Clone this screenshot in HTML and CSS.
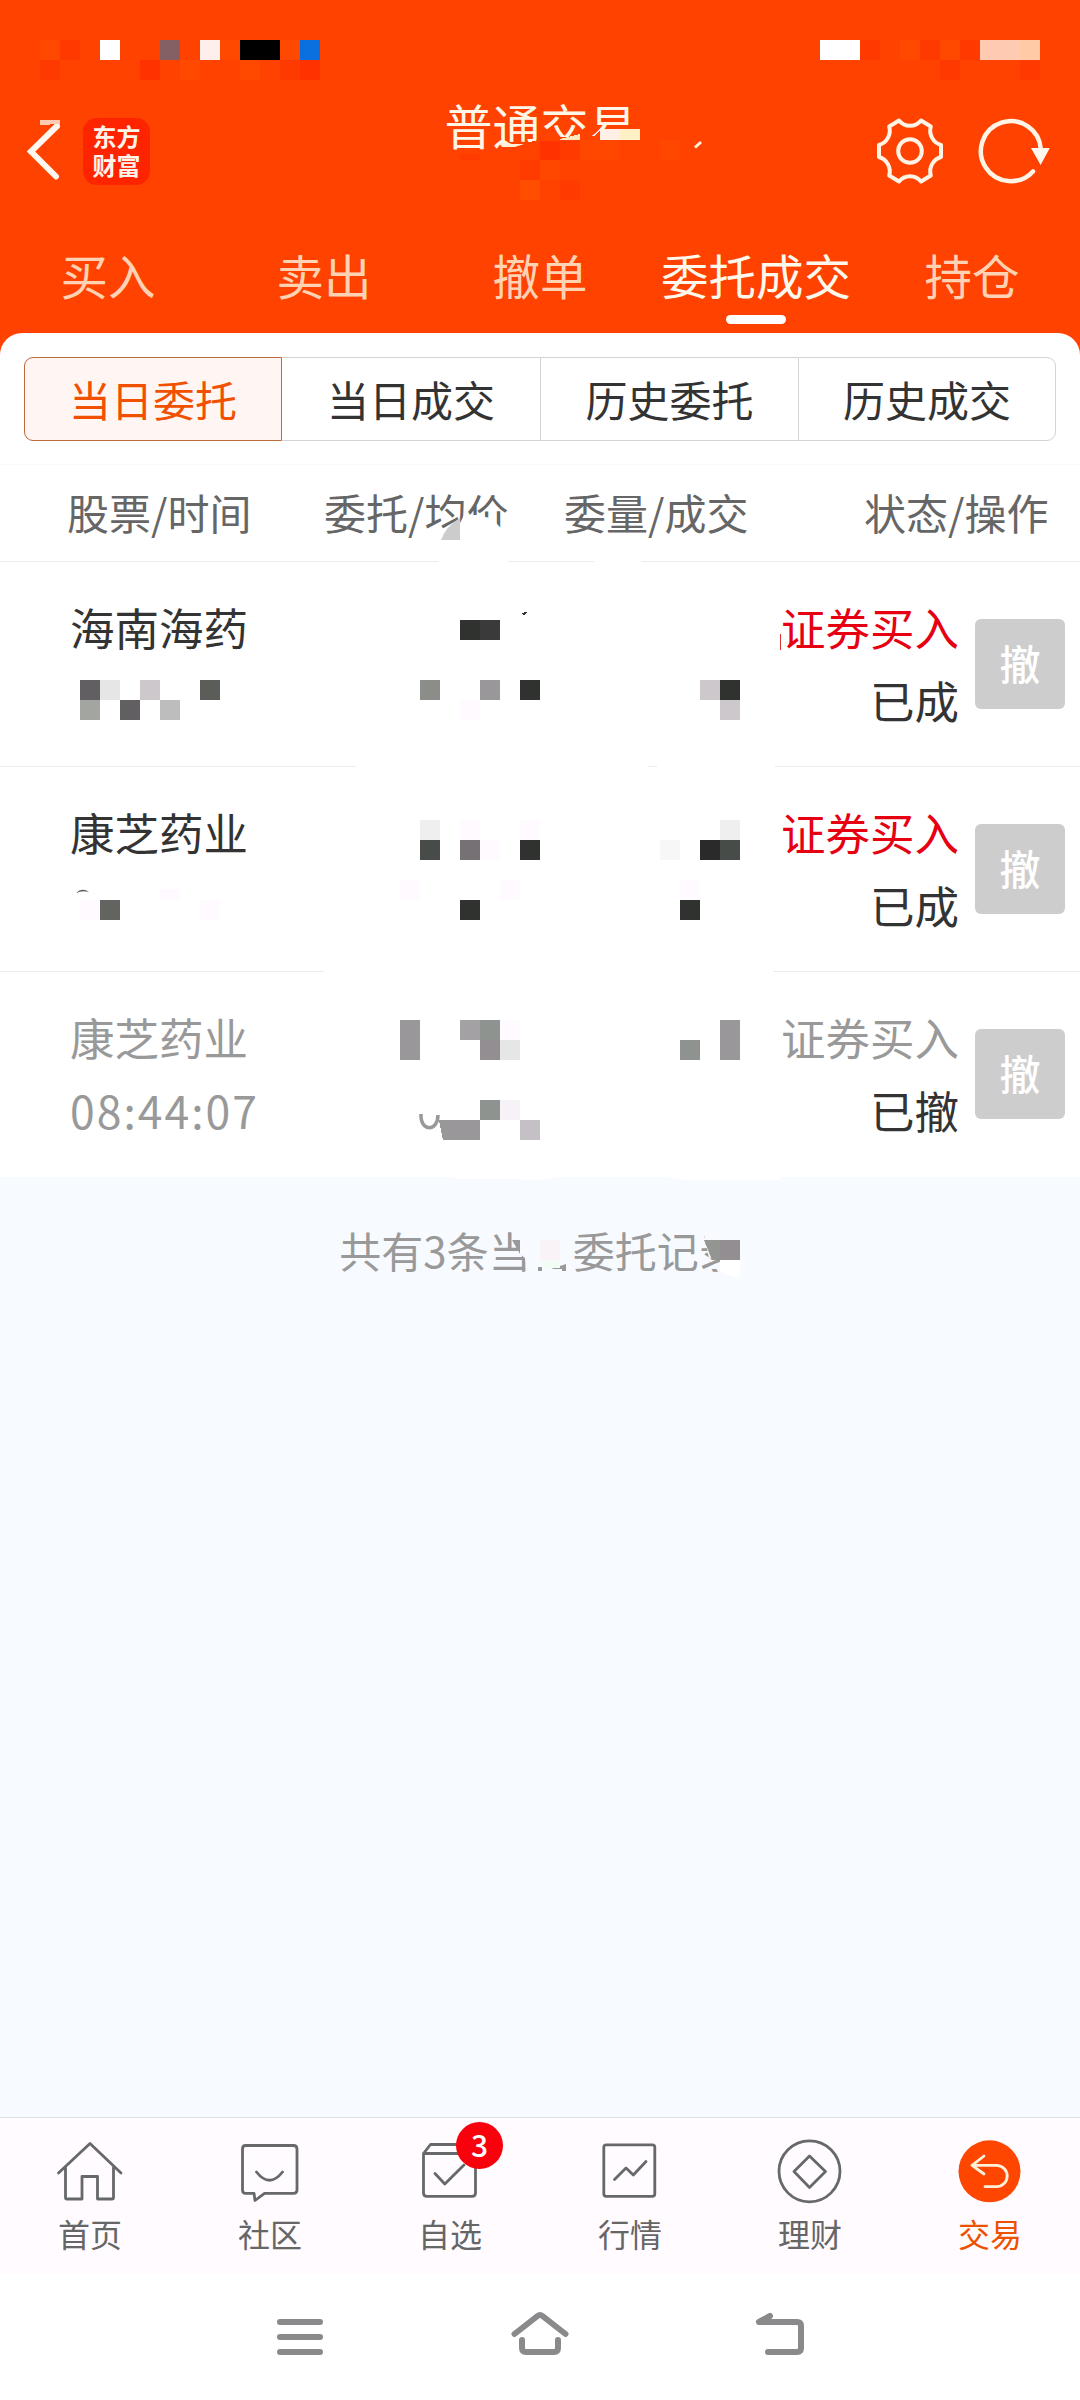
FILE: index.html
```html
<!DOCTYPE html>
<html lang="zh-CN">
<head>
<meta charset="utf-8">
<title>普通交易</title>
<link rel="stylesheet" href="styles.css">
</head>
<body>
<div class="screen">
  <header class="header">
    <div class="titlebar">
      <div class="titlebar-left">
        <svg class="back" viewBox="0 0 40 66" width="40" height="66"><path d="M37 8L11 33.500L36 58.500" fill="none" stroke="#fff8f0" stroke-width="6" stroke-linecap="round" stroke-linejoin="miter"/></svg>
        <div class="logo"><span>东方</span><span>财富</span></div>
      </div>
      <h1 class="title">普通交易</h1>
      <div class="titlebar-right">
        <svg viewBox="-36 -36 72 72" width="72" height="72" fill="none" stroke="#fff4e6" stroke-width="4" stroke-linejoin="round">
          <path d="M31 -6V6A15 15 0 0 0 20.800 24.500L11 30.500A14 14 0 0 0 -11 30.500L-20.800 24.500A15 15 0 0 0 -31 6V-6A15 15 0 0 0 -20.800 -24.500L-11 -30.500A14 14 0 0 0 11 -30.500L20.800 -24.500A15 15 0 0 0 31 -6Z"/>
          <circle r="11.800"/>
        </svg>
        <svg viewBox="-36 -36 78 72" width="78" height="72">
          <path d="M29.800 -2A30 30 0 1 0 22 20.400" fill="none" stroke="#fff4e6" stroke-width="4.500" stroke-linecap="round"/>
          <path d="M20 -3H38.800L29.600 14Z" fill="#fff8f0"/>
        </svg>
      </div>
    </div>
    <nav class="tabs">
      <span class="tab">买入</span>
      <span class="tab">卖出</span>
      <span class="tab">撤单</span>
      <span class="tab tab-on">委托成交</span>
      <span class="tab">持仓</span>
    </nav>
  </header>

  <main class="panel">
    <div class="segments">
      <span class="segment segment-on">当日委托</span>
      <span class="segment">当日成交</span>
      <span class="segment">历史委托</span>
      <span class="segment">历史成交</span>
    </div>
    <div class="columns">
      <span>股票/时间</span>
      <span>委托/均价</span>
      <span>委量/成交</span>
      <span>状态/操作</span>
    </div>
    <section class="order">
      <div class="stock"><span>海南海药</span></div>
      <div class="state"><span class="buy">证券买入</span><span>已成</span></div>
      <button class="cancel">撤</button>
    </section>
    <section class="order">
      <div class="stock"><span>康芝药业</span></div>
      <div class="state"><span class="buy">证券买入</span><span>已成</span></div>
      <button class="cancel">撤</button>
    </section>
    <section class="order order-off">
      <div class="stock"><span>康芝药业</span><span class="time">08:44:07</span></div>
      <div class="state"><span class="buy">证券买入</span><span>已撤</span></div>
      <button class="cancel">撤</button>
    </section>
  </main>

  <div class="rest"><p class="summary">共有3条当日委托记录</p></div>

  <nav class="bottom">
    <div class="item">
      <svg class="icon" viewBox="0 0 80 80"><path d="M8.500 43L40 13.500L71 43M15.500 37.500V67.500Q15.500 69 17 69H32V46.500H47.500V69H62Q63.500 69 63.500 67.500V37.500"/></svg>
      <span>首页</span>
    </div>
    <div class="item">
      <svg class="icon" viewBox="0 0 80 80"><path d="M15.500 15.500H63.500Q67 15.500 67 19V60Q67 63.300 63.500 63.300H34.500L25 70.500L24 63.300H15.500Q12.500 63.300 12.500 60V19Q12.500 15.500 15.500 15.500ZM26.500 42Q39.500 58.500 52.500 42"/></svg>
      <span>社区</span>
    </div>
    <div class="item">
      <svg class="icon" viewBox="0 0 80 80"><path d="M13.500 23.500L20.500 14.500H58.500L65.500 23.500V63Q65.500 66.300 62 66.300H17Q13.500 66.300 13.500 63ZM13.500 23.500H65.500M25 43.500L34.800 54L54 35"/></svg>
      <span>自选</span>
      <b class="badge">3</b>
    </div>
    <div class="item">
      <svg class="icon" viewBox="0 0 80 80"><rect x="13.800" y="14.800" width="51" height="51.500" rx="2.500"/><path d="M24.500 49.500L36 38L43.300 45L56 31.500"/></svg>
      <span>行情</span>
    </div>
    <div class="item">
      <svg class="icon" viewBox="0 0 80 80"><circle cx="39.500" cy="41.300" r="30.500"/><path d="M39.500 26L55.500 41.500L39.500 57.500L24 41.500Z"/></svg>
      <span>理财</span>
    </div>
    <div class="item item-on">
      <svg class="icon" viewBox="0 0 80 80"><circle class="disc" cx="39.500" cy="41.300" r="31"/><path class="arrow" d="M34 26L22 35.300L34 44M22 35.300H46.500A10.700 10.700 0 0 1 46.500 56.700H35"/></svg>
      <span>交易</span>
    </div>
  </nav>

  <footer class="sysbar">
    <svg viewBox="0 0 60 60"><path d="M10 15H50M10 30H50M10 45H50"/></svg>
    <svg viewBox="0 0 60 60"><path d="M4.500 27L27.500 9Q30 7 32.500 9L55.500 27M12 33V41Q12 45 16 45H44Q48 45 48 41V33"/></svg>
    <svg viewBox="0 0 60 60"><path d="M20 9L9 15H47Q51 15 51 19V41Q51 45 47 45H18"/></svg>
  </footer>

  <svg class="mask" viewBox="0 0 1080 2400" width="1080" height="2400" shape-rendering="crispEdges">
    <!-- status bar -->
    <g fill="#ff4800"><path d="M40 40h20v20h-20zM220 40h20v20h-20zM280 40h20v20h-20zM180 60h20v20h-20zM240 60h20v20h-20zM900 40h20v20h-20zM940 40h20v20h-20z"/></g>
    <g fill="#ff3a00"><path d="M60 40h20v20h-20zM40 60h20v20h-20zM280 60h20v20h-20zM860 40h20v20h-20zM920 40h20v20h-20zM960 40h20v20h-20zM940 60h20v20h-20zM1020 60h20v20h-20z"/></g>
    <path fill="#ff3200" d="M140 60h20v20h-20zM300 60h20v20h-20z"/>
    <path fill="#fff" d="M100 40h20v20h-20zM820 40h40v20h-40z"/>
    <path fill="#845f64" d="M160 40h20v20h-20z"/>
    <path fill="#ffefec" d="M200 40h20v20h-20z"/>
    <path fill="#000" d="M240 40h40v20h-40z"/>
    <path fill="#0b70df" d="M300 40h20v20h-20z"/>
    <path fill="#ffcab2" d="M980 40h40v20h-40zM40 120h20v4l-20 1z"/>
    <path fill="#ffcaa5" d="M1020 40h20v20h-20z"/>
    <!-- title -->
    <path fill="#ff4200" d="M500 150L506 144L512 145L523 142L540 141V137H560L594 136L599 131H645V165H534V143L524 144L512 148Z"/>
    <path fill="#ff4200" d="M504 147L534 144V165H504Z"/>
    <path fill="#fff0dc" shape-rendering="auto" d="M499 143L506 143L512 144L524 144L515 147L502 147Z"/>
    <path fill="#ffe7c0" d="M560 139L580 134V140H560Z"/>
    <path fill="#ffefe6" d="M600 129h20v11h-20z"/>
    <path fill="#fff0c6" d="M620 129h20v11h-20z"/>
    <path fill="#ff3200" d="M540 141h20v19h-20z"/>
    <path fill="#ff3b00" d="M560 141h20v19h-20zM520 160h20v20h-20zM560 180h20v20h-20zM460 154h20v6h-20z"/>
    <path fill="#ff4700" d="M580 140h40v20h-40zM540 160h20v20h-20zM660 140h20v20h-20z"/>
    <path fill="#ff4e00" d="M520 180h20v20h-20z"/>
    <path d="M695 147.500L701 142" stroke="#fff0dc" stroke-width="3" shape-rendering="auto"/>
    <!-- column titles and rules -->
    <g fill="#fff" shape-rendering="auto">
      <path d="M442 540L460 523L464 515L484 515L485 517L491 518L497 524L502 529L503 540L510 566H438ZM594 556h47v8h-47zM356 762h292v8h-292zM657 762h118v8h-118zM324 967h449v8h-449zM455 1174h111q-20 8-50 5h-61zM663 1176h117v4h-95z"/>
      <path fill="#ccc" d="M441 540Q446 526 460 518V540Z"/>
    </g>
    <!-- first order -->
    <path fill="#2f322f" d="M460 620h20v20h-20zM520 680h20v20h-20zM720 680h20v20h-20z"/>
    <path fill="#3a3a3a" d="M480 620h20v20h-20z"/>
    <path fill="#333" d="M521 613L527 612L524 616Z"/>
    <path fill="#625f63" d="M80 680h20v20h-20zM120 700h20v20h-20z"/>
    <path fill="#e6e6e6" d="M100 680h20v20h-20z"/>
    <path fill="#cdc8cc" d="M140 680h20v20h-20zM700 680h20v20h-20zM720 700h20v20h-20z"/>
    <path fill="#5b5d59" d="M200 680h20v20h-20z"/>
    <path fill="#a2a5a0" d="M80 700h20v20h-20z"/>
    <path fill="#bdbdbd" d="M160 700h20v20h-20z"/>
    <path fill="#8b8d89" d="M420 680h20v20h-20z"/>
    <path fill="#9a979a" d="M480 680h20v20h-20z"/>
    <path fill="#d33" d="M780 634h1v16h-1z"/>
    <!-- second order -->
    <path fill="#fffaff" d="M460 700h20v20h-20zM460 820h20v20h-20zM480 840h20v20h-20zM520 820h20v20h-20zM400 880h20v20h-20zM500 880h20v20h-20zM80 900h20v20h-20zM160 889h20v11h-20zM200 900h20v20h-20zM680 880h20v20h-20zM500 1020h20v20h-20z"/>
    <path fill="#efefef" d="M420 820h20v20h-20zM720 820h20v20h-20z"/>
    <path fill="#484c48" d="M420 840h20v20h-20zM720 840h20v20h-20z"/>
    <path fill="#757175" d="M460 840h20v20h-20z"/>
    <path fill="#2f322f" d="M520 840h20v20h-20zM460 900h20v20h-20zM680 900h20v20h-20z"/>
    <path fill="#2a2a2a" d="M700 840h20v20h-20z"/>
    <path fill="#f7f7f7" d="M660 840h20v20h-20z"/>
    <path fill="#62655f" d="M100 900h20v20h-20z"/>
    <path fill="#555" shape-rendering="auto" d="M76 893Q82 887 89 892Q82 890 76 893Z"/>
    <!-- third order -->
    <path fill="#9a979a" d="M400 1020h20v40h-20zM720 1020h20v40h-20zM439 1120H480V1140H443Z"/>
    <path fill="#a4a1a4" d="M460 1020h20v20h-20z"/>
    <path fill="#8f938f" d="M480 1020h20v20h-20zM480 1100h20v20h-20zM680 1040h20v20h-20z"/>
    <path fill="#928e92" d="M480 1040h20v20h-20z"/>
    <path fill="#e6e6e6" d="M500 1040h20v20h-20z"/>
    <path fill="#f7f2f7" d="M500 1100h20v20h-20z"/>
    <path fill="#c5c0c5" d="M520 1120h20v20h-20z"/>
    <path fill="none" stroke="#999" stroke-width="3.500" shape-rendering="auto" d="M421 1114C420 1132 438 1132 438 1115"/>
    <!-- summary -->
    <g shape-rendering="auto">
      <path fill="#f7fbff" d="M511 1230H574V1276H528L525 1258L520 1254V1240H514ZM703 1230H741V1277H722L714 1266L722 1260L709 1258Z"/>
      <path fill="#999" d="M512 1240H520V1254ZM538 1267L542 1267V1271H538ZM551 1269L566 1264V1271H562V1269Z"/>
      <path fill="#929592" d="M704 1240H720V1260H712Z"/>
    </g>
    <path fill="#928e92" d="M720 1240h20v20h-20z"/>
    <path fill="#fff" d="M720 1260h20v17q-10 0-20-6z"/>
    <path fill="#f9f3f8" d="M540 1240h20v20h-20z"/>
    <path fill="#f4fcf6" d="M540 1260h20v8h-15z"/>
  </svg>
</div>
</body>
</html>
```
FILE: styles.css
```css
* { box-sizing: border-box; }

body {
  margin: 0;
  font-family: "Noto Sans CJK SC", "Noto Sans", sans-serif;
  color: #333;
}

.screen {
  position: relative;
  display: flex;
  flex-direction: column;
  width: 1080px;
  height: 2400px;
  background: #ff4200;
  overflow: hidden;
}

.header {
  display: flex;
  flex-direction: column;
  height: 333px;
  padding-top: 88px;
}

.titlebar {
  display: grid;
  grid-template-columns: 1fr auto 1fr;
  height: 126px;
  padding: 0 27px 0 20px;
}

.titlebar-left { display: flex; align-items: center; gap: 23px; }
.titlebar-right { display: flex; align-items: center; justify-content: flex-end; gap: 29px; }

.logo {
  display: flex;
  flex-direction: column;
  align-items: center;
  justify-content: center;
  width: 67px;
  height: 67px;
  padding-bottom: 2px;
  border-radius: 14px;
  background: #ff2400;
  color: #fff4ea;
  font-size: 24px;
  font-weight: 700;
  line-height: 29px;
}

.title {
  margin: 11px 0 0;
  color: #fff6e8;
  font-size: 48px;
  font-weight: 400;
  line-height: 50px;
  transform: translateX(4px);
}

.tabs { display: grid; grid-template-columns: repeat(5, 1fr); flex: 1; }

.tab {
  display: flex;
  flex-direction: column;
  align-items: center;
  padding-top: 31px;
  color: #ffd2b4;
  font-size: 47.500px;
  line-height: 60px;
  white-space: nowrap;
}

.tab-on { color: #fff8ec; }
.tab-on::after {
  content: "";
  width: 60px;
  height: 9px;
  margin-top: 10px;
  border-radius: 5px;
  background: #fff;
}

.panel {
  display: flex;
  flex-direction: column;
  height: 844px;
  border-radius: 22px 22px 0 0;
  background: #fff;
}

.segments {
  display: grid;
  grid-template-columns: repeat(4, 1fr);
  height: 84px;
  margin: 24px 24px 0;
}

.segment {
  border: 1px solid #d4d4d6;
  border-right-width: 0;
  font-size: 42px;
  line-height: 81px;
  text-align: center;
}

.segment:nth-child(2) { border-left-width: 0; }
.segment:last-child { border-right-width: 1px; border-radius: 0 9px 9px 0; }
.segment-on {
  border: 1px solid #bd6a3d;
  border-radius: 9px 0 0 9px;
  background: #fff6f4;
  color: #f05000;
}

.columns {
  display: grid;
  grid-template-columns: 257px 240px 300px 1fr;
  height: 98px;
  margin-top: 23px;
  padding-left: 67px;
  border-top: 1px solid #fafafa;
  border-bottom: 1px solid #ececec;
  color: #666;
  font-size: 42px;
  line-height: 93px;
}

.order {
  display: flex;
  align-items: flex-start;
  height: 205px;
  padding: 35px 15px 0 70px;
  border-bottom: 1px solid #ececec;
  font-size: 44.500px;
  line-height: 60px;
}

.order:last-child { border-bottom: 0; }
.stock, .state { display: flex; flex-direction: column; gap: 13px; }
.state { margin-left: auto; align-items: flex-end; }
.buy { color: #e60012; }
.order-off .stock, .order-off .buy { color: #999; }
.time { letter-spacing: 2px; }

.cancel {
  width: 90px;
  height: 90px;
  margin: 22px 0 0 16px;
  padding: 0 0 4px;
  border: 0;
  border-radius: 6px;
  background: #cdcdcd;
  color: #fff;
  font: 500 41px "Noto Sans CJK SC", sans-serif;
}

.rest { flex: 1; background: #f7fbff; }
.summary {
  margin: 43px 0 0;
  color: #999;
  font-size: 42px;
  line-height: 60px;
  text-align: center;
}

.bottom {
  display: grid;
  grid-template-columns: repeat(6, 1fr);
  height: 157px;
  border-top: 1px solid #e0dfe3;
  background: #fffbff;
}

.item {
  position: relative;
  display: flex;
  flex-direction: column;
  align-items: center;
  padding-top: 12px;
  color: #666;
  font-size: 32px;
  line-height: 46px;
}

.icon {
  width: 80px;
  height: 80px;
  fill: none;
  stroke: #66686a;
  stroke-width: 2.800;
  stroke-linecap: round;
  stroke-linejoin: round;
}

.item-on { color: #ec5200; }
.disc { fill: #ff4600; stroke: none; }
.arrow { stroke: #fff0da; }

.badge {
  position: absolute;
  top: 4px;
  left: 96px;
  width: 47px;
  height: 47px;
  border-radius: 50%;
  background: #f9000d;
  color: #fff;
  font-size: 30px;
  font-weight: 500;
  line-height: 45px;
  text-align: center;
}

.sysbar {
  display: flex;
  justify-content: center;
  gap: 180px;
  height: 126px;
  padding-top: 33px;
  background: #fff;
}

.sysbar svg {
  width: 60px;
  height: 60px;
  fill: none;
  stroke: #8a898b;
  stroke-width: 6;
  stroke-linecap: round;
  stroke-linejoin: round;
}

.mask { position: absolute; inset: 0; }
```
